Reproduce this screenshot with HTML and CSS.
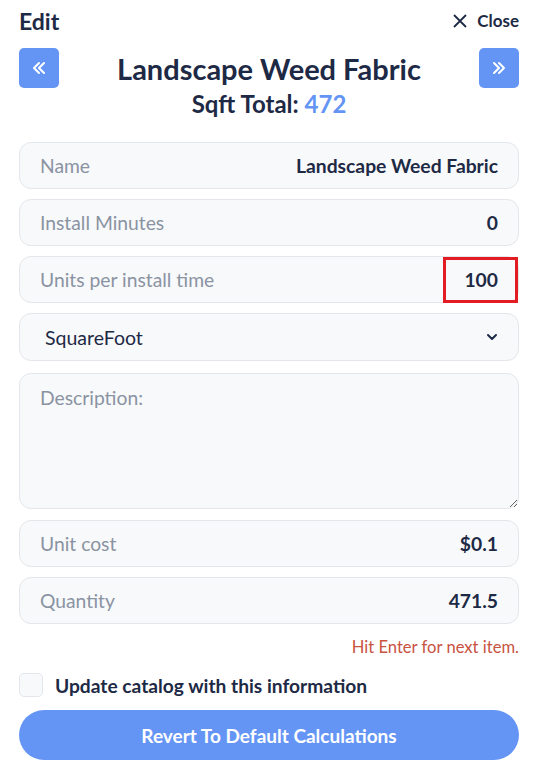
FILE: index.html
```html
<!DOCTYPE html>
<html>
<head>
<meta charset="utf-8">
<link rel="stylesheet" href="styles.css">
</head>
<body>
<div class="panel">
  <div class="topbar">
    <div class="edit">Edit</div>
    <div class="close">
      <svg width="16" height="16" viewBox="0 0 16 16"><path d="M2 2L14 14M14 2L2 14" stroke="#1e2a45" stroke-width="1.8" fill="none"/></svg>
      <span>Close</span>
    </div>
  </div>
  <div class="titlerow">
    <button class="nav"><svg width="18" height="18" viewBox="0 0 18 18"><path d="M9 4L4 9L9 14M14 4L9 9L14 14" stroke="#fff" stroke-width="2" fill="none" stroke-linecap="round" stroke-linejoin="round"/></svg></button>
    <h1 class="title">Landscape Weed Fabric</h1>
    <button class="nav"><svg width="18" height="18" viewBox="0 0 18 18"><path d="M4 4L9 9L4 14M9 4L14 9L9 14" stroke="#fff" stroke-width="2" fill="none" stroke-linecap="round" stroke-linejoin="round"/></svg></button>
  </div>
  <div class="sqft">Sqft Total: <span class="num">472</span></div>

  <div class="fields">
    <div class="field"><span class="label">Name</span><span class="value">Landscape Weed Fabric</span></div>
    <div class="field"><span class="label">Install Minutes</span><span class="value">0</span></div>
    <div class="field"><span class="label">Units per install time</span><span class="value boxed">100</span></div>
    <div class="field select"><span class="selval">SquareFoot</span>
      <svg width="12" height="8" viewBox="0 0 12 8"><path d="M2 2L6 6L10 2" stroke="#1e2a45" stroke-width="2" fill="none" stroke-linecap="round" stroke-linejoin="round"/></svg>
    </div>
    <textarea class="desc" placeholder="Description:"></textarea>
    <div class="field"><span class="label">Unit cost</span><span class="value">$0.1</span></div>
    <div class="field"><span class="label">Quantity</span><span class="value">471.5</span></div>
  </div>
  <div class="hint">Hit Enter for next item.</div>
  <label class="check"><span class="box"></span><span>Update catalog with this information</span></label>
  <button class="revert">Revert To Default Calculations</button>
</div>
</body>
</html>
```
FILE: styles.css
```css
* { box-sizing: border-box; }
body {
  margin: 0;
  background: #fff;
  font-family: "Lato", "Noto Sans", sans-serif;
  color: #1e2a45;
}
.panel {
  padding: 7px 14px 0 19px;
}
.topbar {
  display: flex;
  justify-content: space-between;
  align-items: center;
  height: 27px;
}
.edit {
  font-size: 23px;
  font-weight: 700;
}
.close {
  display: flex;
  align-items: center;
  gap: 9px;
  font-size: 17px;
  font-weight: 700;
}
.titlerow {
  display: flex;
  align-items: center;
  justify-content: space-between;
  margin-top: 14px;
}
.nav {
  width: 40px;
  height: 40px;
  border: none;
  border-radius: 5px;
  background: #6495f5;
  display: flex;
  align-items: center;
  justify-content: center;
  padding: 0;
}
.title {
  margin: 0;
  font-size: 29px;
  font-weight: 700;
}
.sqft {
  text-align: center;
  font-size: 24px;
  font-weight: 700;
  margin-top: 1px;
}
.sqft .num { color: #6495f5; }
.fields {
  display: flex;
  flex-direction: column;
  gap: 10px;
  margin-top: 24px;
}
.field {
  height: 47px;
  border: 1px solid #e3e6ea;
  border-radius: 12px;
  background: #f8f9fb;
  display: flex;
  align-items: center;
  justify-content: space-between;
  padding: 0 20px;
}
.label {
  color: #8a93a2;
  font-size: 19.3px;
}
.value {
  font-size: 19.3px;
  font-weight: 700;
}
.boxed {
  position: relative;
}
.boxed::after {
  content: "";
  position: absolute;
  left: -21px;
  right: -20px;
  top: -11px;
  bottom: -12px;
  border: 3px solid #e31b23;
}
.select {
  height: 48px;
  padding: 0 20px 0 25px;
}
.selval {
  font-size: 19.5px;
}
.desc {
  height: 136px;
  margin: 2px 0 1px;
  border: 1px solid #e3e6ea;
  border-radius: 12px;
  background: #f8f9fb;
  padding: 12px 20px;
  font-family: inherit;
  font-size: 19.3px;
  resize: vertical;
  outline: none;
}
.desc::placeholder { color: #8a93a2; }
.hint {
  text-align: right;
  color: #c8533f;
  font-size: 16.6px;
  margin-top: 13px;
}
.check {
  display: flex;
  align-items: center;
  gap: 12px;
  margin-top: 16px;
  font-size: 19.2px;
  font-weight: 700;
}
.box {
  width: 24px;
  height: 24px;
  border: 1px solid #e3e6ea;
  border-radius: 5px;
  background: #f8f9fb;
}
.revert {
  display: block;
  width: 100%;
  margin-top: 13px;
  height: 50px;
  border: none;
  border-radius: 25px;
  background: #6495f5;
  color: #fff;
  font-family: inherit;
  font-size: 19px;
  font-weight: 700;
}
```
